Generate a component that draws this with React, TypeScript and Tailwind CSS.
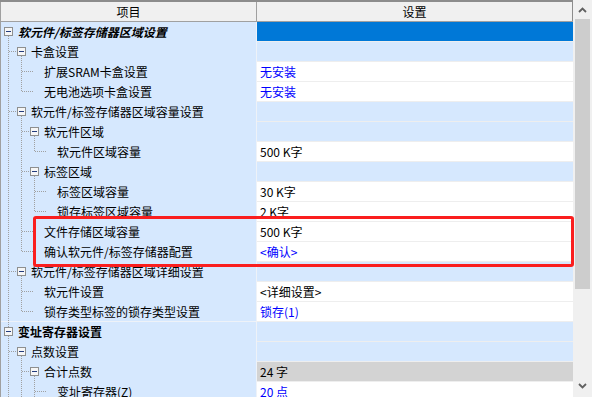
type Row = {
  t: string;
  l: number;
  v?: string;
  kind?: "sel" | "grp" | "gray";
  blue?: boolean;
  font?: "bi" | "b";
};

const rows: Row[] = [
  { t: "软元件/标签存储器区域设置", l: 0, kind: "sel", font: "bi" },
  { t: "卡盒设置", l: 1, kind: "grp" },
  { t: "扩展SRAM卡盒设置", l: 2, v: "无安装", blue: true },
  { t: "无电池选项卡盒设置", l: 2, v: "无安装", blue: true },
  { t: "软元件/标签存储器区域容量设置", l: 1, kind: "grp" },
  { t: "软元件区域", l: 2, kind: "grp" },
  { t: "软元件区域容量", l: 3, v: "500 K字" },
  { t: "标签区域", l: 2, kind: "grp" },
  { t: "标签区域容量", l: 3, v: "30 K字" },
  { t: "锁存标签区域容量", l: 3, v: "2 K字" },
  { t: "文件存储区域容量", l: 2, v: "500 K字" },
  { t: "确认软元件/标签存储器配置", l: 2, v: "<确认>", blue: true },
  { t: "软元件/标签存储器区域详细设置", l: 1, kind: "grp" },
  { t: "软元件设置", l: 2, v: "<详细设置>" },
  { t: "锁存类型标签的锁存类型设置", l: 2, v: "锁存(1)", blue: true },
  { t: "变址寄存器设置", l: 0, kind: "grp", font: "b" },
  { t: "点数设置", l: 1, kind: "grp" },
  { t: "合计点数", l: 2, v: "24 字", kind: "gray" },
  { t: "变址寄存器(Z)", l: 3, v: "20 点", blue: true },
  { t: "长变址寄存器(LZ)", l: 3, v: "2 点", blue: true },
  { t: "软元件/标签点数", l: 2, v: "", kind: "grp" },
  { t: "变址寄存器", l: 3, v: "" },
  { t: "其他设置", l: 1, kind: "grp" },
  { t: "文件寄存器设置", l: 0, kind: "grp" },
];

const X = (k: number) => 8 + 13 * k;

function hasNext(i: number) {
  const L = rows[i].l;
  for (let j = i + 1; j < rows.length; j++) {
    if (rows[j].l < L) return false;
    if (rows[j].l === L) return true;
  }
  return false;
}

function hasKids(i: number) {
  return i + 1 < rows.length && rows[i + 1].l > rows[i].l;
}

function ancestor(i: number, k: number) {
  for (let j = i - 1; j >= 0; j--) if (rows[j].l === k) return j;
  return -1;
}

function TreeLines({ i }: { i: number }) {
  const L = rows[i].l;
  const v: [number, number, number][] = [];
  const h: [number, number][] = [];

  for (let k = 0; k <= L - 2; k++) {
    if (hasNext(ancestor(i, k + 1))) v.push([X(k), 0, 20]);
  }
  if (L >= 1) {
    if (hasNext(ancestor(i, 0))) v.push([X(0), 0, 20]);
    v.push([X(L - 1), 0, hasNext(i) ? 20 : 10]);
    h.push([X(L - 1) + 1, hasKids(i) ? X(L) - 4 : X(L)]);
    if (hasKids(i)) v.push([X(L), 14, 20]);
  } else {
    if (rows.slice(0, i).some((r) => r.l === 0)) v.push([X(0), 0, 5]);
    if (hasKids(i) || hasNext(i)) v.push([X(0), 14, 20]);
  }

  const w = 17 + 13 * L;
  return (
    <svg width={w} height={20} viewBox={`1 0 ${w} 20`} className="shrink-0">
      {v.map(([x, a, b], n) => (
        <line key={"v" + n} x1={x + 0.5} x2={x + 0.5} y1={a} y2={b} stroke="#a0a0a0" strokeDasharray="1 1" />
      ))}
      {h.map(([a, b], n) => (
        <line key={"h" + n} x1={a} x2={b} y1={9.5} y2={9.5} stroke="#a0a0a0" strokeDasharray="1 1" />
      ))}
      {hasKids(i) && (
        <g>
          <rect x={X(L) - 3.5} y={5.5} width={8} height={8} fill="#f6f6f6" stroke="#8e8f8f" />
          <line x1={X(L) - 2} x2={X(L) + 3} y1={9.5} y2={9.5} stroke="#233c7e" />
        </g>
      )}
    </svg>
  );
}

function Chevron({ up }: { up?: boolean }) {
  return (
    <svg width="9" height="6" viewBox="0 0 9 6">
      <polyline
        points={up ? "1,5 4.5,1.5 8,5" : "1,1 4.5,4.5 8,1"}
        fill="none"
        stroke="#606060"
        strokeWidth="1.8"
      />
    </svg>
  );
}

export default function App() {
  return (
    <div className="relative flex w-[592px] h-[397px] overflow-hidden bg-white text-[12px] text-black font-['Noto_Sans_CJK_SC','Noto_Sans',sans-serif]">
      <div className="flex flex-col w-[573px]">
        <div className="flex h-[22px] shrink-0 border-t-2 border-b border-t-[#8c8c8c] border-b-[#a0a0a0] bg-[#f0f0f0]">
          <div className="w-[257px] border-l border-r border-[#a0a0a0] flex items-center justify-center">项目</div>
          <div className="flex-1 border-r border-[#8c8c8c] flex items-center justify-center">设置</div>
        </div>
        {rows.map((r, i) => {
          const nextRoot = i + 1 < rows.length && rows[i + 1].l === 0;
          return (
            <div key={i} className="flex h-[20px] shrink-0">
              <div
                className={
                  "w-[257px] h-[20px] flex border-l border-r border-l-[#a0a0a0] border-r-[#eef2f8] bg-[#d6e8fe] whitespace-nowrap overflow-hidden " +
                  (nextRoot ? "shadow-[inset_0_-1px_0_#eef2f8]" : "")
                }
              >
                <TreeLines i={i} />
                <span
                  className={
                    "leading-[19px] " +
                    (r.font === "bi" ? "font-bold italic" : r.font === "b" ? "font-bold" : "")
                  }
                >
                  {r.t}
                </span>
              </div>
              <div
                className={
                  "flex-1 h-[20px] border-b border-[#eeeeee] pl-[3px] leading-[19px] whitespace-nowrap " +
                  (r.kind === "sel"
                    ? "bg-[#0078d7]"
                    : r.kind === "grp"
                    ? "bg-[#d6e8fe]"
                    : r.kind === "gray"
                    ? "bg-[#d3d3d3]"
                    : "bg-white") +
                  (r.blue ? " text-[#0000ff]" : "")
                }
              >
                {r.v}
              </div>
            </div>
          );
        })}
      </div>
      <div className="flex flex-col items-center w-[19px] h-[397px] bg-[#f0f0f0]">
        <div className="h-[19px] flex items-center justify-center">
          <Chevron up />
        </div>
        <div className="w-[15px] h-[270px] bg-[#cdcdcd]" />
        <div className="flex-1" />
        <div className="h-[19px] mb-[2px] flex items-center justify-center">
          <Chevron />
        </div>
      </div>
      <div className="absolute left-[33px] top-[216px] w-[541px] h-[51px] border-[3px] border-[#fa1e1e] rounded-[3px]" />
    </div>
  );
}
